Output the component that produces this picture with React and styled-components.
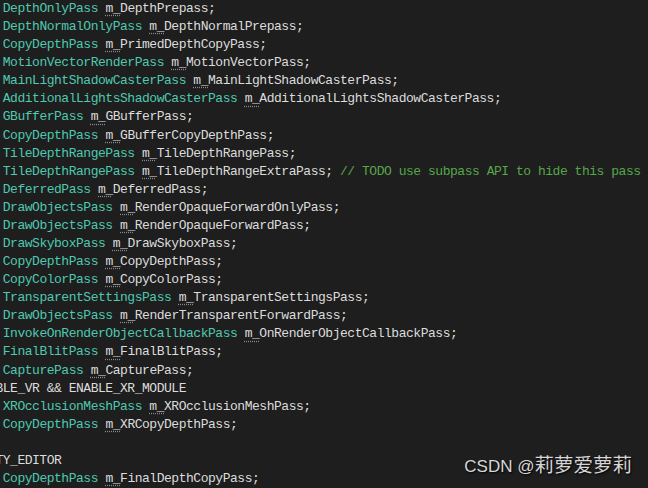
import React from "react"
import styled, { createGlobalStyle } from "styled-components"

// cols of horizontal scroll in the editor view (indent of 8, first char at ~2.7px)
const CHAR_W = 7.33

const lines = [
  ["DepthOnlyPass", "m_DepthPrepass;"],
  ["DepthNormalOnlyPass", "m_DepthNormalPrepass;"],
  ["CopyDepthPass", "m_PrimedDepthCopyPass;"],
  ["MotionVectorRenderPass", "m_MotionVectorPass;"],
  ["MainLightShadowCasterPass", "m_MainLightShadowCasterPass;"],
  ["AdditionalLightsShadowCasterPass", "m_AdditionalLightsShadowCasterPass;"],
  ["GBufferPass", "m_GBufferPass;"],
  ["CopyDepthPass", "m_GBufferCopyDepthPass;"],
  ["TileDepthRangePass", "m_TileDepthRangePass;"],
  ["TileDepthRangePass", "m_TileDepthRangeExtraPass;", "// TODO use subpass API to hide this pass"],
  ["DeferredPass", "m_DeferredPass;"],
  ["DrawObjectsPass", "m_RenderOpaqueForwardOnlyPass;"],
  ["DrawObjectsPass", "m_RenderOpaqueForwardPass;"],
  ["DrawSkyboxPass", "m_DrawSkyboxPass;"],
  ["CopyDepthPass", "m_CopyDepthPass;"],
  ["CopyColorPass", "m_CopyColorPass;"],
  ["TransparentSettingsPass", "m_TransparentSettingsPass;"],
  ["DrawObjectsPass", "m_RenderTransparentForwardPass;"],
  ["InvokeOnRenderObjectCallbackPass", "m_OnRenderObjectCallbackPass;"],
  ["FinalBlitPass", "m_FinalBlitPass;"],
  ["CapturePass", "m_CapturePass;"],
  { directive: "#if ENABLE_VR && ENABLE_XR_MODULE" },
  ["XROcclusionMeshPass", "m_XROcclusionMeshPass;"],
  ["CopyDepthPass", "m_XRCopyDepthPass;"],
  null,
  { directive: "#if UNITY_EDITOR" },
  ["CopyDepthPass", "m_FinalDepthCopyPass;"],
]

const GlobalStyle = createGlobalStyle`
  html, body {
    margin: 0;
    padding: 0;
    background: #1e1e1e;
  }
  body {
    width: 648px;
    height: 488px;
    overflow: hidden;
  }
`

const Editor = styled.div`
  position: relative;
  width: 648px;
  height: 488px;
  overflow: hidden;
  background: #1e1e1e;
`

const Code = styled.div`
  margin-left: ${2.7 - 8 * CHAR_W}px;
  font-family: "Liberation Mono", "DejaVu Sans Mono", monospace;
  font-size: 13px;
  letter-spacing: -0.47px;
  line-height: 18.08px;
  white-space: pre;
  color: #dcdcdc;
`

const Line = styled.div`
  height: 18.08px;
`

const Type = styled.span`
  color: #4ec9b0;
`

const Field = styled.span`
  color: #dcdcdc;
`

const Prefix = styled.span`
  text-decoration: underline dotted #8a8a8a;
  text-underline-offset: 3px;
`

const Comment = styled.span`
  color: #57a64a;
`

const Watermark = styled.div`
  position: absolute;
  right: 16px;
  bottom: 10px;
  font-family: "Liberation Sans", "Noto Sans CJK SC", sans-serif;
  font-size: 17px;
  color: #d6d6d6;
  text-shadow: 1px 1px 2px #000;
  white-space: nowrap;
`

const Handle = styled.span`
  font-family: "Noto Sans CJK SC", sans-serif;
  font-size: 19.5px;
`

function CodeLine({ line }) {
  if (line === null) return <Line />
  if (line.directive) return <Line>{line.directive}</Line>
  const [type, field, comment] = line
  return (
    <Line>
      {"        "}
      <Type>{type}</Type>{" "}
      <Field>
        <Prefix>m_</Prefix>
        {field.slice(2)}
      </Field>
      {comment && (
        <>
          {" "}
          <Comment>{comment}</Comment>
        </>
      )}
    </Line>
  )
}

export default function App() {
  return (
    <Editor>
      <GlobalStyle />
      <Code>
        {lines.map((line, i) => (
          <CodeLine key={i} line={line} />
        ))}
      </Code>
      <Watermark>
        CSDN @<Handle>莉萝爱萝莉</Handle>
      </Watermark>
    </Editor>
  )
}
